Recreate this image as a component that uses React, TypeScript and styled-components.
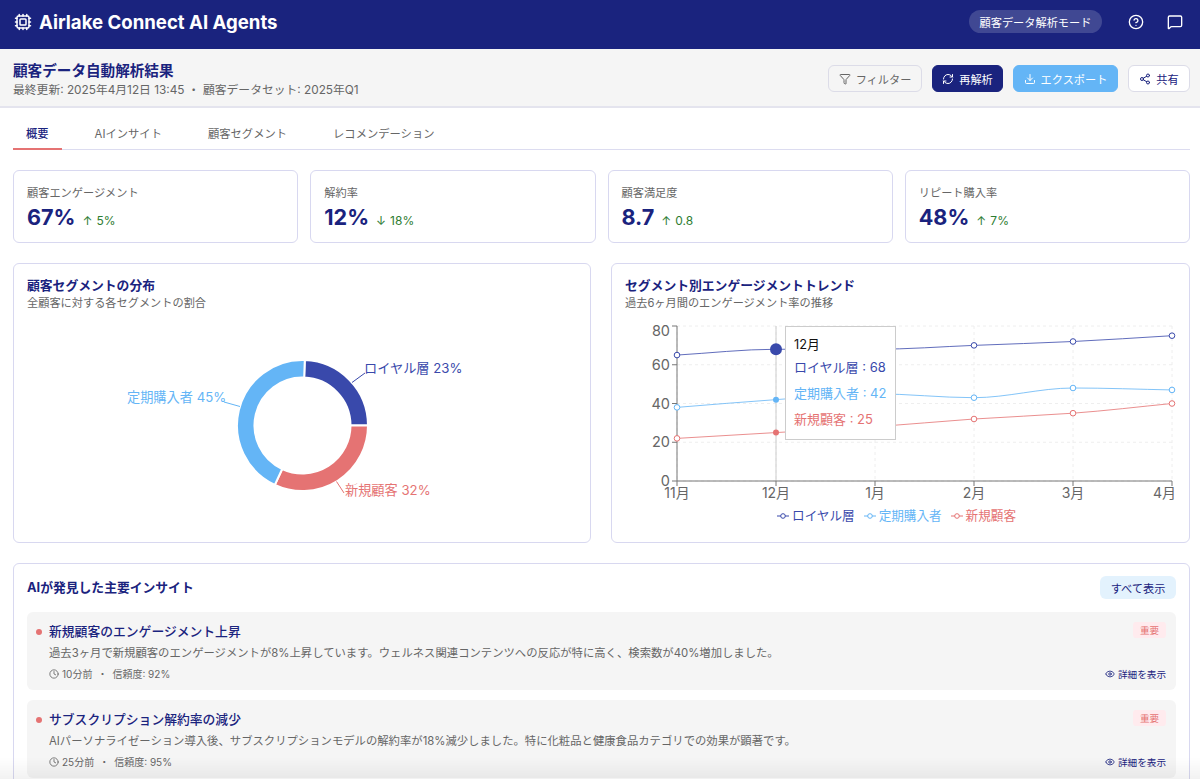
import styled, { createGlobalStyle } from "styled-components";
import {
  CircleHelp,
  Clock,
  Cpu,
  Download,
  Eye,
  Filter,
  MessageSquare,
  RefreshCw,
  Share2,
} from "lucide-react";

const NAVY = "#1a237e";
const ROYAL = "#3949ab";
const SKY = "#64b5f6";
const CORAL = "#e57373";

const GlobalStyle = createGlobalStyle`
  * { box-sizing: border-box; }
  html, body { margin: 0; height: 779px; overflow: hidden; background: #fff; }
  body { font-family: Inter, "Noto Sans CJK JP", sans-serif; color: #333; }
`;

const metrics = [
  { label: "顧客エンゲージメント", value: "67%", arrow: "↑", change: "5%" },
  { label: "解約率", value: "12%", arrow: "↓", change: "18%" },
  { label: "顧客満足度", value: "8.7", arrow: "↑", change: "0.8" },
  { label: "リピート購入率", value: "48%", arrow: "↑", change: "7%" },
];

const insights = [
  {
    title: "新規顧客のエンゲージメント上昇",
    text: "過去3ヶ月で新規顧客のエンゲージメントが8%上昇しています。ウェルネス関連コンテンツへの反応が特に高く、検索数が40%増加しました。",
    time: "10分前",
    score: "92%",
  },
  {
    title: "サブスクリプション解約率の減少",
    text: "AIパーソナライゼーション導入後、サブスクリプションモデルの解約率が18%減少しました。特に化粧品と健康食品カテゴリでの効果が顕著です。",
    time: "25分前",
    score: "95%",
  },
];

const months = ["11月", "12月", "1月", "2月", "3月", "4月"];
const series = [
  { name: "ロイヤル層", color: ROYAL, values: [65, 68, 68, 70, 72, 75], active: 6 },
  { name: "定期購入者", color: SKY, values: [38, 42, 45, 43, 48, 47], active: 3 },
  { name: "新規顧客", color: CORAL, values: [22, 25, 28, 32, 35, 40], active: 3 },
];

const xAt = (i: number) => 677 + i * 99;
const yAt = (v: number) => 481 - v * 1.9375;

// monotone curve, close to what the chart lib draws
const curve = (values: number[]) => {
  const pts = values.map((v, i) => [xAt(i), yAt(v)]);
  const d = pts.slice(1).map((p, i) => (p[1] - pts[i][1]) / 99);
  const m = pts.map((_, i) => {
    if (i === 0) return d[0];
    if (i === pts.length - 1) return d[d.length - 1];
    return d[i - 1] * d[i] <= 0 ? 0 : (2 * d[i - 1] * d[i]) / (d[i - 1] + d[i]);
  });
  let path = `M${pts[0][0]},${pts[0][1]}`;
  for (let i = 1; i < pts.length; i++) {
    path += ` C${pts[i - 1][0] + 33},${pts[i - 1][1] + m[i - 1] * 33} ${pts[i][0] - 33},${pts[i][1] - m[i] * 33} ${pts[i][0]},${pts[i][1]}`;
  }
  return path;
};

const polar = (deg: number, r: number) => {
  const a = ((deg - 90) * Math.PI) / 180;
  return `${302.5 + r * Math.cos(a)},${425.5 + r * Math.sin(a)}`;
};

const ring = (from: number, to: number) => {
  const large = to - from > 180 ? 1 : 0;
  return `M${polar(from, 65.5)} A65.5,65.5 0 ${large} 1 ${polar(to, 65.5)} L${polar(to, 48)} A48,48 0 ${large} 0 ${polar(from, 48)} Z`;
};

const DonutChart = () => (
  <DonutSvg viewBox="27 318 550 210">
    <path d={ring(2, 90)} fill={ROYAL} stroke="#fff" strokeWidth="2" />
    <path d={ring(90, 205)} fill={CORAL} stroke="#fff" strokeWidth="2" />
    <path d={ring(205, 362)} fill={SKY} stroke="#fff" strokeWidth="2" />
    <polyline points="352,382.5 365,373" fill="none" stroke={ROYAL} />
    <polyline points="240,406.5 224,402" fill="none" stroke={SKY} />
    <polyline points="336.5,481.5 344,493" fill="none" stroke={CORAL} />
    <text x="364" y="373" fontSize="13.2" fill={ROYAL}>ロイヤル層 23%</text>
    <text x="127" y="402" fontSize="13.2" fill={SKY}>定期購入者 45%</text>
    <text x="345" y="495" fontSize="13.2" fill={CORAL}>新規顧客 32%</text>
  </DonutSvg>
);

const TrendChart = () => (
  <ChartArea>
    <TrendSvg viewBox="625 318 552 182">
      {[0, 1, 2, 3, 4].map((n) => (
        <line key={n} x1="677" x2="1172" y1={yAt(n * 20)} y2={yAt(n * 20)} stroke="#eee" strokeDasharray="3 3" />
      ))}
      {months.map((_, i) => (
        <line key={i} x1={xAt(i)} x2={xAt(i)} y1="326" y2="481" stroke="#eee" strokeDasharray="3 3" />
      ))}
      <line x1="776" x2="776" y1="326" y2="481" stroke="#ccc" />
      <line x1="677" x2="677" y1="326" y2="481" stroke="#777" />
      <line x1="677" x2="1172" y1="481" y2="481" stroke="#777" />
      {[0, 20, 40, 60, 80].map((v) => (
        <g key={v}>
          <line x1="672" x2="677" y1={yAt(v)} y2={yAt(v)} stroke="#777" />
          <text x="670" y={yAt(v) + (v === 80 ? 10 : 5)} fontSize="14.5" fill="#666" textAnchor="end">{v}</text>
        </g>
      ))}
      {months.map((m, i) => (
        <g key={m}>
          <line x1={xAt(i)} x2={xAt(i)} y1="481" y2="486" stroke="#777" />
          <text x={i === 5 ? 1176 : xAt(i)} y="498" fontSize="14" fill="#666" textAnchor={i === 5 ? "end" : "middle"}>{m}</text>
        </g>
      ))}
      {series.map((s) => (
        <g key={s.name}>
          <path d={curve(s.values)} fill="none" stroke={s.color} strokeWidth="1" strokeOpacity="0.8" />
          {s.values.map((v, i) =>
            i === 1 ? (
              <circle key={i} cx={xAt(i)} cy={yAt(v)} r={s.active} fill={s.color} />
            ) : (
              <circle key={i} cx={xAt(i)} cy={yAt(v)} r="2.8" fill="#fff" stroke={s.color} />
            )
          )}
        </g>
      ))}
    </TrendSvg>
    <Tooltip>
      <TooltipTitle>12月</TooltipTitle>
      {series.map((s) => (
        <TooltipRow key={s.name} $color={s.color}>
          {s.name} : {s.values[1]}
        </TooltipRow>
      ))}
    </Tooltip>
    <Legend>
      {series.map((s) => (
        <LegendItem key={s.name} $color={s.color}>
          <svg width="12" height="8" viewBox="0 0 12 8">
            <line x1="0" x2="12" y1="4" y2="4" stroke={s.color} />
            <circle cx="6" cy="4" r="2.3" fill="#fff" stroke={s.color} />
          </svg>
          {s.name}
        </LegendItem>
      ))}
    </Legend>
  </ChartArea>
);

export default function App() {
  return (
    <>
      <GlobalStyle />
      <TopBar>
        <Brand>
          <Cpu size={18} strokeWidth={2} />
          Airlake Connect AI Agents
        </Brand>
        <TopActions>
          <ModePill>顧客データ解析モード</ModePill>
          <CircleHelp size={16} />
          <MessageSquare size={16} />
        </TopActions>
      </TopBar>
      <SubHeader>
        <TitleBlock>
          <PageTitle>顧客データ自動解析結果</PageTitle>
          <PageMeta>最終更新: 2025年4月12日 13:45 ・ 顧客データセット: 2025年Q1</PageMeta>
        </TitleBlock>
        <ActionRow>
          <ActionButton $variant="muted" $width={94}><Filter size={12} />フィルター</ActionButton>
          <ActionButton $variant="primary" $width={71}><RefreshCw size={12} />再解析</ActionButton>
          <ActionButton $variant="sky" $width={105}><Download size={12} />エクスポート</ActionButton>
          <ActionButton $variant="plain" $width={62}><Share2 size={12} />共有</ActionButton>
        </ActionRow>
      </SubHeader>
      <Main>
        <Tabs>
          <Tab $active>概要</Tab>
          <Tab>AIインサイト</Tab>
          <Tab>顧客セグメント</Tab>
          <Tab>レコメンデーション</Tab>
        </Tabs>
        <MetricGrid>
          {metrics.map((m) => (
            <MetricCard key={m.label}>
              <MetricLabel>{m.label}</MetricLabel>
              <MetricLine>
                <MetricValue>{m.value}</MetricValue>
                <MetricChange>
                  <span>{m.arrow}</span>
                  {m.change}
                </MetricChange>
              </MetricLine>
            </MetricCard>
          ))}
        </MetricGrid>
        <ChartGrid>
          <ChartCard>
            <CardTitle>顧客セグメントの分布</CardTitle>
            <CardNote>全顧客に対する各セグメントの割合</CardNote>
            <DonutChart />
          </ChartCard>
          <ChartCard>
            <CardTitle>セグメント別エンゲージメントトレンド</CardTitle>
            <CardNote>過去6ヶ月間のエンゲージメント率の推移</CardNote>
            <TrendChart />
          </ChartCard>
        </ChartGrid>
        <InsightCard>
          <InsightHead>
            <CardTitle>AIが発見した主要インサイト</CardTitle>
            <ShowAll>すべて表示</ShowAll>
          </InsightHead>
          {insights.map((item) => (
            <InsightItem key={item.title}>
              <InsightTop>
                <InsightTitle>{item.title}</InsightTitle>
                <Badge>重要</Badge>
              </InsightTop>
              <InsightText>{item.text}</InsightText>
              <InsightFoot>
                <FootMeta>
                  <Clock size={10} />
                  {item.time}
                  <FootDot>・</FootDot>
                  信頼度: {item.score}
                </FootMeta>
                <DetailLink><Eye size={10} />詳細を表示</DetailLink>
              </InsightFoot>
            </InsightItem>
          ))}
        </InsightCard>
      </Main>
      <BottomFade />
    </>
  );
}

const TopBar = styled.header`
  height: 49px;
  padding: 0 17px 5px 14px;
  background: ${NAVY};
  color: #fff;
  display: flex;
  align-items: center;
  justify-content: space-between;
`;

const Brand = styled.div`
  display: flex;
  align-items: center;
  gap: 7px;
  font-size: 18.6px;
  font-weight: 700;
`;

const TopActions = styled.div`
  display: flex;
  align-items: center;
  gap: 23px;
`;

const ModePill = styled.div`
  height: 23px;
  width: 133px;
  border-radius: 12px;
  margin: 0 3px 1px 0;
  background: rgba(255, 255, 255, 0.17);
  font-size: 11.2px;
  display: flex;
  align-items: center;
  justify-content: center;
`;

const SubHeader = styled.section`
  height: 59px;
  padding: 0 10px 0 13px;
  background: #f5f5f5;
  border-bottom: 2px solid #e4e4ee;
  display: flex;
  align-items: center;
  justify-content: space-between;
`;

const TitleBlock = styled.div`
  padding-top: 5px;
`;

const PageTitle = styled.h1`
  margin: 0;
  font-size: 14.6px;
  line-height: 20px;
  font-weight: 700;
  color: ${NAVY};
`;

const PageMeta = styled.div`
  font-size: 11.8px;
  line-height: 18px;
  color: #666;
`;

const ActionRow = styled.div`
  display: flex;
  gap: 10px;
  padding-top: 2px;
`;

const buttonSkins = {
  muted: `background: #f5f5f5; color: #666; border: 1px solid #dcdce8;`,
  primary: `background: ${NAVY}; color: #fff; border: 1px solid ${NAVY};`,
  sky: `background: ${SKY}; color: #fff; border: 1px solid ${SKY};`,
  plain: `background: #fff; color: ${NAVY}; border: 1px solid #dcdce8;`,
};

const ActionButton = styled.div<{ $variant: keyof typeof buttonSkins; $width: number }>`
  ${(p) => buttonSkins[p.$variant]}
  width: ${(p) => p.$width}px;
  height: 27px;
  border-radius: 6px;
  font-size: 11.2px;
  display: flex;
  align-items: center;
  justify-content: center;
  gap: 5px;
`;

const Main = styled.main`
  padding: 12px 10px 0 13px;
`;

const Tabs = styled.nav`
  display: flex;
  gap: 20px;
  border-bottom: 1px solid #dcdcf0;
  margin-bottom: 20px;
`;

const Tab = styled.div<{ $active?: boolean }>`
  height: 30px;
  padding: 6px 13px 0;
  margin-bottom: -1px;
  font-size: 11.3px;
  line-height: 17px;
  font-weight: ${(p) => (p.$active ? 500 : 400)};
  color: ${(p) => (p.$active ? NAVY : "#666")};
  border-bottom: 2px solid ${(p) => (p.$active ? CORAL : "transparent")};
`;

const MetricGrid = styled.div`
  display: grid;
  grid-template-columns: repeat(4, minmax(0, 1fr));
  gap: 12px;
  margin-bottom: 20px;
`;

const MetricCard = styled.div`
  height: 73px;
  padding: 14px 13px 0;
  border: 1px solid #d8d8f0;
  border-radius: 6px;
`;

const MetricLabel = styled.div`
  font-size: 11.2px;
  line-height: 16px;
  color: #666;
`;

const MetricLine = styled.div`
  display: flex;
  align-items: baseline;
  gap: 7px;
  margin-top: 1px;
`;

const MetricValue = styled.div`
  font-size: 21.6px;
  line-height: 30px;
  font-weight: 700;
  color: ${NAVY};
`;

const MetricChange = styled.div`
  font-size: 12px;
  color: #2e7d32;
  display: flex;
  gap: 4px;
`;

const ChartGrid = styled.div`
  display: grid;
  grid-template-columns: 578px minmax(0, 1fr);
  gap: 20px;
  margin-bottom: 20px;
`;

const ChartCard = styled.div`
  height: 280px;
  padding: 13px 13px 0;
  border: 1px solid #d8d8f0;
  border-radius: 6px;
`;

const CardTitle = styled.h2`
  margin: 0;
  font-size: 12.8px;
  line-height: 18px;
  font-weight: 700;
  color: ${NAVY};
`;

const CardNote = styled.div`
  font-size: 11.2px;
  line-height: 17px;
  color: #666;
`;

const DonutSvg = styled.svg`
  display: block;
  width: 550px;
  height: 210px;
  margin-top: 6px;
`;

const ChartArea = styled.div`
  position: relative;
  margin-top: 6px;
`;

const TrendSvg = styled.svg`
  display: block;
  width: 552px;
  height: 182px;
`;

const Tooltip = styled.div`
  position: absolute;
  left: 160px;
  top: 8px;
  width: 111px;
  height: 114px;
  padding: 8px 8px;
  background: #fff;
  border: 1px solid #ccc;
  white-space: nowrap;
`;

const TooltipTitle = styled.div`
  font-size: 12.8px;
  line-height: 19px;
  color: #111;
`;

const TooltipRow = styled.div<{ $color: string }>`
  font-size: 13px;
  line-height: 26px;
  color: ${(p) => p.$color};
`;

const Legend = styled.div`
  display: flex;
  justify-content: center;
  gap: 9px;
  padding-top: 7px;
  margin-left: -8px;
`;

const LegendItem = styled.div<{ $color: string }>`
  display: flex;
  align-items: center;
  gap: 3px;
  font-size: 12.6px;
  line-height: 18px;
  color: ${(p) => p.$color};
`;

const InsightCard = styled.div`
  height: 240px;
  padding: 12px 13px 0;
  border: 1px solid #d8d8f0;
  border-radius: 6px;
`;

const InsightHead = styled.div`
  height: 23px;
  display: flex;
  align-items: center;
  justify-content: space-between;
  margin-bottom: 13px;
`;

const ShowAll = styled.div`
  width: 76px;
  height: 23px;
  border-radius: 6px;
  background: #e3f2fd;
  color: ${NAVY};
  font-size: 11.2px;
  display: flex;
  align-items: center;
  justify-content: center;
`;

const InsightItem = styled.article`
  height: 78px;
  margin-bottom: 10px;
  padding: 10px 10px 0 22px;
  background: #f5f5f5;
  border-radius: 6px;
`;

const InsightTop = styled.div`
  display: flex;
  justify-content: space-between;
  align-items: flex-start;
  height: 19px;
`;

const InsightTitle = styled.h3`
  position: relative;
  margin: 1px 0 0;
  font-size: 12.8px;
  line-height: 18px;
  font-weight: 500;
  color: ${NAVY};

  &::before {
    content: "";
    position: absolute;
    left: -13px;
    top: 6px;
    width: 6px;
    height: 6px;
    border-radius: 50%;
    background: ${CORAL};
  }
`;

const Badge = styled.span`
  width: 33px;
  height: 16px;
  border-radius: 3px;
  background: #ffebee;
  color: ${CORAL};
  font-size: 9.6px;
  display: flex;
  align-items: center;
  justify-content: center;
`;

const InsightText = styled.p`
  margin: 4px 0 0;
  font-size: 11.35px;
  line-height: 17px;
  color: #666;
`;

const InsightFoot = styled.div`
  margin-top: 4px;
  display: flex;
  justify-content: space-between;
  align-items: center;
`;

const FootMeta = styled.div`
  display: flex;
  align-items: center;
  gap: 3px;
  font-size: 10px;
  line-height: 16px;
  color: #666;
`;

const FootDot = styled.span`
  margin: 0 2px;
`;

const DetailLink = styled.div`
  display: flex;
  align-items: center;
  gap: 3px;
  font-size: 9.6px;
  color: ${NAVY};
`;

const BottomFade = styled.div`
  position: fixed;
  left: 0;
  right: 0;
  bottom: 0;
  height: 22px;
  background: linear-gradient(to bottom, rgba(0, 0, 0, 0), rgba(0, 0, 0, 0.05));
  pointer-events: none;
`;
